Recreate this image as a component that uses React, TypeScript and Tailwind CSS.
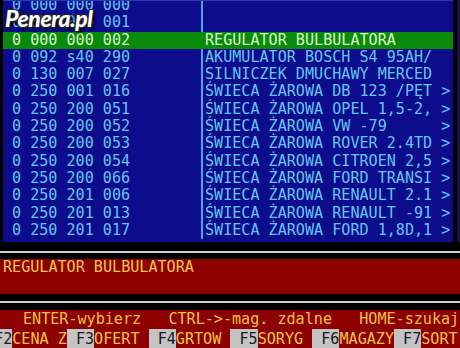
import React from 'react';

const rows = [
  { code: '0 000 000 000', name: '' },
  { code: '0 000 000 001', name: '' },
  { code: '0 000 000 002', name: 'REGULATOR BULBULATORA' },
  { code: '0 092 s40 290', name: 'AKUMULATOR BOSCH S4 95AH/' },
  { code: '0 130 007 027', name: 'SILNICZEK DMUCHAWY MERCED' },
  { code: '0 250 001 016', name: 'ŚWIECA ŻAROWA DB 123 /PĘT >' },
  { code: '0 250 200 051', name: 'ŚWIECA ŻAROWA OPEL 1,5-2, >' },
  { code: '0 250 200 052', name: 'ŚWIECA ŻAROWA VW -79      >' },
  { code: '0 250 200 053', name: 'ŚWIECA ŻAROWA ROVER 2.4TD >' },
  { code: '0 250 200 054', name: 'ŚWIECA ŻAROWA CITROEN 2,5 >' },
  { code: '0 250 200 066', name: 'ŚWIECA ŻAROWA FORD TRANSI >' },
  { code: '0 250 201 006', name: 'ŚWIECA ŻAROWA RENAULT 2.1 >' },
  { code: '0 250 201 013', name: 'ŚWIECA ŻAROWA RENAULT -91 >' },
  { code: '0 250 201 017', name: 'ŚWIECA ŻAROWA FORD 1,8D,1 >' },
];

const fkeys = [
  { key: ' F2', label: 'CENA Z' },
  { key: ' F3', label: 'OFERT ' },
  { key: ' F4', label: 'GRTOW ' },
  { key: ' F5', label: 'SORYG ' },
  { key: ' F6', label: 'MAGAZY' },
  { key: ' F7', label: 'SORT  ' },
];

const SELECTED = 2;

function ListRow({ code, name, selected }: { code: string; name: string; selected: boolean }) {
  return (
    <div
      className={`flex h-[17.3px] leading-[17.3px] whitespace-pre ${
        selected ? 'bg-[#0a8a0a] text-[#d8f8c8]' : 'text-[#62c6f2]'
      }`}
    >
      <div className="w-[198px] pl-[9px]">{code}</div>
      <div className={`w-[2px] ${selected ? '' : 'bg-[#4aa4ea]'}`} />
      <div className="pl-[2px]">{name}</div>
    </div>
  );
}

export default function App() {
  return (
    <div className="relative w-[460px] h-[348px] overflow-hidden bg-black font-['DejaVu_Sans_Mono',monospace] text-[15.1px]">
      {/* list window */}
      <div className="flex h-[242px]">
        <div className="ml-[3px] w-[450px] h-full overflow-hidden bg-[#0c0c8c] border-t border-[#2a3ab0]">
          <div className="-mt-[4px]">
            {rows.map((r, i) => (
              <ListRow key={i} code={r.code} name={r.name} selected={i === SELECTED} />
            ))}
          </div>
        </div>
        <div className="ml-[4px] w-[3px] h-full bg-[#14144a]" />
      </div>

      {/* separator */}
      <div className="h-[9px]" />
      <div className="h-[2px] bg-[#d0d0d0]" />
      <div className="h-[6px]" />

      {/* description box */}
      <div className="h-[35px] bg-[#8c0000] pl-[3px] leading-[17.3px] text-[#f4c444] whitespace-pre">
        REGULATOR BULBULATORA
      </div>

      <div className="h-[7px]" />
      <div className="h-[2px] bg-[#d0d0d0]" />
      <div className="h-[7px]" />

      {/* status + function keys */}
      <div className="h-[39px] bg-[#8c0000] whitespace-pre">
        <div className="h-[19px] pl-[23px] leading-[19px] text-[#f0c040]">
          ENTER-wybierz   CTRL-&gt;-mag. zdalne   HOME-szukaj
        </div>
        <div className="flex -ml-[15px] h-[20px] leading-[20px]">
          {fkeys.map((f) => (
            <React.Fragment key={f.key}>
              <span className="bg-[#c4c4c4] text-[#1a1a1a]">{f.key}</span>
              <span className="text-[#f4c444]">{f.label}</span>
            </React.Fragment>
          ))}
        </div>
      </div>

      {/* watermark */}
      <div className="absolute left-[5px] top-[1px] font-['Lato',sans-serif] italic font-black text-[23px] text-white tracking-[-0.5px] [text-shadow:1px_1px_0_#222,-1px_1px_0_#222,1px_-1px_0_#222,-1px_-1px_0_#222,2px_2px_3px_#000]">
        Penera.pl
      </div>
    </div>
  );
}
